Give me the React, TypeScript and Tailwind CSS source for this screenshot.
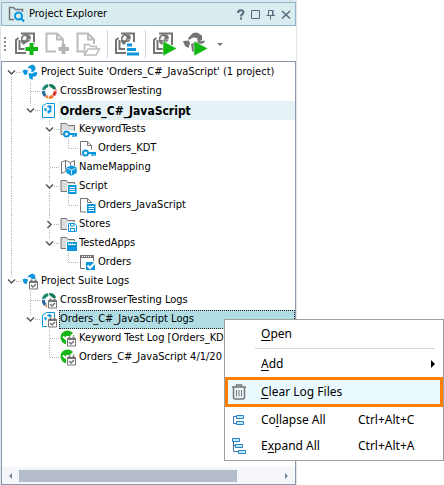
import React from 'react';
import clsx from 'clsx';

type Cell = 'blank' | 'line' | 'tee' | 'elbow' | 'root' | 'open' | 'openLast' | 'closed';

interface TreeRow {
  label: string;
  cells: Cell[];
  icon: React.ReactNode;
  state?: 'active' | 'selected';
}

const BLUE = '#0a96dc';
const GRAY = '#757575';

/* ---------- icon parts ---------- */

const Logo = ({ color = BLUE }: { color?: string }) => (
  <g fill={color}>
    <path d="M6.500 5.500 L8 3 L11.500 1.500 L14 3 L14.500 6.500 L12 9 L10 8.500 L10.500 6 L8.500 5 Z" />
    <path d="M1.500 7.500 L4 6.500 L7 7.500 L6.500 9.500 L5.500 12 L3 11.500 Z" />
    <path d="M7.500 10 L11 10.500 L14 9 L16.500 9.500 L15.500 12.500 L13 14 L12 13 L11.500 17 L8.500 15.500 Z" />
  </g>
);

const Ring = () => (
  <g fill="none" strokeWidth="3">
    <path d="M3.500 8 A6 6 0 0 1 8 3.500" stroke="#1d8a70" />
    <path d="M8.500 3.500 A6 6 0 0 1 14.800 7" stroke="#147b50" />
    <path d="M15 7.500 A6 6 0 0 1 13.500 13.500" stroke="#d3352c" />
    <path d="M13 14 A6 6 0 0 1 6 14.200" stroke="#f07a2a" />
    <path d="M5.500 13.800 A6 6 0 0 1 3.500 8" stroke="#2c6a9c" />
    <path d="M8 1 L9.500 5 M17 9 L13 8.500 M1 9 L5 8 M8 17 L9 13" stroke="#fff" strokeWidth="1" />
  </g>
);

const ProjectBox = () => (
  <g>
    <path d="M2.500 5 V16.500 H14.500 V2.500 H6.500 Z" fill="#fff" stroke={BLUE} />
    <path d="M6.500 5.500 L9.500 4 L11.500 5 V7.500 L9.500 9 L9 6.500 Z M4 7.500 L6.500 7 V10 L5 10.500 Z M7.500 9.500 L12 8.500 L11 11 L9.500 11.500 V13 L7.500 12 Z" fill={BLUE} />
  </g>
);

const Folder = () => <path d="M2 14.500 V3.500 H7.500 L9 5.500 H15.500 V14.500 Z" fill="#dcdcdc" stroke={GRAY} />;

const Page = () => <path d="M2.500 16 V2.500 H9.500 L13.500 6.500 V16 Z M9.500 2.500 V6.500 H13.500" fill="#fff" stroke={GRAY} />;

const Key = () => (
  <g>
    <path d="M4 10 H9 L18.500 11 V17 H4 Z" fill="#fff" />
    <circle cx="7.500" cy="14" r="2.500" fill="none" stroke={BLUE} strokeWidth="2" />
    <path d="M10 14 H18 M14.500 14 V17 M17 14 V16.500" stroke={BLUE} strokeWidth="2" />
  </g>
);

const ScriptBadge = () => (
  <g>
    <path d="M8 7 H18 V18 H8 Z" fill="#fff" />
    <path d="M9 8 H17.500 V17 H9 Z" fill={BLUE} />
    <path d="M10.500 10.500 H16 M10.500 12.500 H16 M10.500 14.500 H16" stroke="#fff" />
  </g>
);

const LogBadge = () => (
  <g>
    <path d="M7 7 H18 V18 H7 Z" fill="#fff" />
    <path d="M8.500 9.500 H16.500 V17 H8.500 Z" fill="#fff" stroke={GRAY} />
    <path d="M8.500 10 H16.500 M10.500 7.500 V10 M14.500 7.500 V10" stroke={GRAY} strokeWidth="2" />
    <path d="M10 13 L12 15 L15 12" fill="none" stroke={GRAY} strokeWidth="1.500" />
  </g>
);

const Passed = () => (
  <g>
    <circle cx="8.500" cy="8.500" r="7" fill="#17b617" />
    <path d="M4 7.500 L8 11 L15 4.500" fill="none" stroke="#fff" strokeWidth="2" />
  </g>
);

const Icon = ({ children }: { children: React.ReactNode }) => (
  <svg className="h-[19px] w-[19px] shrink-0" viewBox="0 0 19 19" aria-hidden="true">
    {children}
  </svg>
);

/* ---------- tree ---------- */

const rows: TreeRow[] = [
  { label: "Project Suite 'Orders_C#_JavaScript' (1 project)", cells: ['root'], icon: <Logo /> },
  { label: 'CrossBrowserTesting', cells: ['line', 'tee'], icon: <Ring /> },
  { label: 'Orders_C#_JavaScript', cells: ['line', 'openLast'], icon: <ProjectBox />, state: 'active' },
  { label: 'KeywordTests', cells: ['line', 'blank', 'open'], icon: <><Folder /><Key /></> },
  { label: 'Orders_KDT', cells: ['line', 'blank', 'line', 'elbow'], icon: <><Page /><Key /></> },
  {
    label: 'NameMapping',
    cells: ['line', 'blank', 'tee'],
    icon: (
      <>
        <path d="M2.500 4 L6.500 2.500 L11.500 4.500 L15.500 2.500 V14 L11.500 15.500 L6.500 13.500 L2.500 15.500 Z M6.500 2.500 V13.500 M11.500 4.500 V9" fill="#fff" stroke={GRAY} />
        <path d="M7 9.500 L12.500 7 L18 9.500 V15 L12.500 18 L7 15 Z" fill={BLUE} stroke="#fff" strokeWidth="0.500" />
        <path d="M8.500 10.500 L12.500 12 L16.500 10.500 M12.500 12 V16.500" fill="none" stroke="#fff" strokeWidth="0.800" />
      </>
    ),
  },
  { label: 'Script', cells: ['line', 'blank', 'open'], icon: <><Folder /><ScriptBadge /></> },
  { label: 'Orders_JavaScript', cells: ['line', 'blank', 'line', 'elbow'], icon: <><Page /><ScriptBadge /></> },
  {
    label: 'Stores',
    cells: ['line', 'blank', 'closed'],
    icon: (
      <>
        <Folder />
        <path d="M8 7 H18 V18 H8 Z" fill="#fff" />
        <path d="M9.500 8.500 H15.500 L17.500 10.500 V16.500 H9.500 Z" fill="#fff" stroke={BLUE} />
        <path d="M11.500 8.500 V11 H15 V8.500 M11.500 16.500 V13.500 H15.500 V16.500" fill="none" stroke={BLUE} />
      </>
    ),
  },
  {
    label: 'TestedApps',
    cells: ['line', 'blank', 'openLast'],
    icon: (
      <>
        <Folder />
        <path d="M7 7 H18 V18 H7 Z" fill="#fff" />
        <path d="M8 8 H18 V17 H8 Z" fill={BLUE} />
        <path d="M9 10.500 H17" stroke="#fff" />
        <path d="M9 9.200 H14" stroke="#fff" strokeWidth="0.700" strokeDasharray="1 1" />
      </>
    ),
  },
  {
    label: 'Orders',
    cells: ['line', 'blank', 'blank', 'elbow'],
    icon: (
      <>
        <path d="M2.500 3 H15.500 V15.500 H2.500 Z" fill="#fff" stroke={GRAY} />
        <path d="M2 3.500 H16" stroke={GRAY} strokeWidth="3" />
        <path d="M4 3.500 H13" stroke="#fff" strokeDasharray="1 1" />
        <path d="M7 8 H18 V18 H7 Z" fill="#fff" />
        <path d="M8 9 H17 V17 H8 Z" fill={BLUE} />
        <path d="M9.500 12.500 L12 15 L17.500 9" fill="none" stroke="#fff" strokeWidth="2" />
      </>
    ),
  },
  { label: 'Project Suite Logs', cells: ['openLast'], icon: <><Logo /><LogBadge /></> },
  { label: 'CrossBrowserTesting Logs', cells: ['blank', 'tee'], icon: <><Ring /><LogBadge /></> },
  { label: 'Orders_C#_JavaScript Logs', cells: ['blank', 'openLast'], icon: <><ProjectBox /><LogBadge /></>, state: 'selected' },
  { label: 'Keyword Test Log [Orders_KD', cells: ['blank', 'blank', 'tee'], icon: <><Passed /><LogBadge /></> },
  { label: 'Orders_C#_JavaScript 4/1/20', cells: ['blank', 'blank', 'elbow'], icon: <><Passed /><LogBadge /></> },
];

const GUIDES: Record<Cell, string> = {
  blank: '',
  line: 'M9.500 0 V19',
  tee: 'M9.500 0 V19 M10 9.500 H19',
  elbow: 'M9.500 0 V9.500 H19',
  root: 'M9.500 14 V19 M14 9.500 H19',
  open: 'M9.500 0 V5 M9.500 14 V19 M14 9.500 H19',
  openLast: 'M9.500 0 V5 M14 9.500 H19',
  closed: 'M9.500 0 V4 M9.500 15 V19 M14 9.500 H19',
};

const GuideCell = ({ cell }: { cell: Cell }) => {
  const guide = (
    <svg className="h-[19px] w-[19px] shrink-0" viewBox="0 0 19 19" aria-hidden="true">
      <path d={GUIDES[cell]} fill="none" stroke="#b4b4b4" strokeDasharray="1 1" />
      {(cell === 'root' || cell === 'open' || cell === 'openLast') && (
        <path d="M6 7.500 L9.500 11 L13 7.500" fill="none" stroke="#555" strokeWidth="1.500" />
      )}
      {cell === 'closed' && <path d="M7.500 6 L11 9.500 L7.500 13" fill="none" stroke="#555" strokeWidth="1.500" />}
    </svg>
  );
  if (cell === 'blank' || cell === 'line' || cell === 'tee' || cell === 'elbow') return guide;
  return (
    <button type="button" aria-label={cell === 'closed' ? 'Expand' : 'Collapse'} className="shrink-0">
      {guide}
    </button>
  );
};

const Tree = () => (
  <ul role="tree" aria-label="Project Explorer" className="overflow-hidden pt-px">
    {rows.map((row) => (
      <li key={row.label} role="treeitem" aria-selected={row.state === 'selected'} className="flex h-[19px]">
        {row.cells.map((cell, i) => (
          <GuideCell key={i} cell={cell} />
        ))}
        <Icon>{row.icon}</Icon>
        <span
          className={clsx(
            'flex flex-1 items-center overflow-hidden border whitespace-nowrap',
            row.state === 'selected' ? 'border-dotted border-[#222] bg-[#b0dce4]' : 'border-transparent',
            row.state === 'active' && 'bg-[#e4f2f6] text-[12px] font-bold'
          )}
        >
          {row.label}
        </span>
      </li>
    ))}
  </ul>
);

/* ---------- toolbar ---------- */

const ToolProject = () => (
  <>
    <path d="M12 22 H2 V9 L4.500 7 M7 2.500 H20 V14 M5.500 9 V18 H11" fill="none" stroke={GRAY} strokeWidth="2" />
    <path d="M7 6 L10 3 L15 3.500 L17 6 L16 10 L12 12 L9.500 14 L7 11 Z" fill={GRAY} />
    <path d="M10 5 L12.500 6 L11.500 9 L8.500 8.500 Z M13 9 L17 8.500" fill="#fff" stroke="#fff" strokeWidth="0.500" />
  </>
);

const ToolPage = () => (
  <path d="M11 20.500 H1.500 V2.500 H12 L18 8.500 V13 M12 2.500 V8.500 H18" fill="none" stroke="#bcbcbc" strokeWidth="2" />
);

const Play = () => <path d="M11 10 L25 17.500 L11 25 Z" fill="#12b812" stroke="#fff" strokeWidth="0.500" />;

const ToolButton = ({ label, children }: { label: string; children: React.ReactNode }) => (
  <button type="button" aria-label={label} className="h-[26px] w-[25px] shrink-0">
    <svg className="h-[26px] w-[25px]" viewBox="0 0 25 26">
      {children}
    </svg>
  </button>
);

const Toolbar = () => (
  <div className="flex h-[35px] items-center gap-1.5 bg-white pl-0.5">
    <svg className="h-4 w-[5px]" viewBox="0 0 5 16" aria-hidden="true">
      <path d="M2 1 V16" stroke="#8a8a8a" strokeWidth="2" strokeDasharray="2 2" />
    </svg>
    <ToolButton label="Add New Project">
      <ToolProject />
      <path d="M17.500 11 V25 M10.500 18 H24.500" stroke="#fff" strokeWidth="6" />
      <path d="M17.500 12 V24 M11.500 18 H24" stroke="#12b812" strokeWidth="4" />
    </ToolButton>
    <ToolButton label="Add New Item">
      <ToolPage />
      <path d="M18.500 13 V23 M13.500 18 H24" stroke="#b4b4b4" strokeWidth="4" />
    </ToolButton>
    <ToolButton label="Add Existing Item">
      <ToolPage />
      <path d="M8.500 23 V13.500 H13 L15 15.500 H20.500 V18 H12 L8.500 24 H20 L23.500 18 H20" fill="#fff" stroke="#bcbcbc" strokeWidth="1.500" />
    </ToolButton>
    <span className="h-7 w-px bg-[#d4d4d4]" />
    <ToolButton label="Project Tests">
      <ToolProject />
      <path d="M12 11 H25 V25 H12 Z" fill="#fff" />
      <path d="M13 14 H18 M13 18.500 H22 M13 23 H25" stroke={BLUE} strokeWidth="3" />
    </ToolButton>
    <span className="h-7 w-px bg-[#d4d4d4]" />
    <ToolButton label="Run Project">
      <ToolProject />
      <Play />
    </ToolButton>
    <ToolButton label="Run Project Suite">
      <path d="M5 7 L10 2 L14 1.500 L19 4.500 V9 L15 11 L14 7 L10 6.500 L6 9 Z M0 10 L6 9.500 L7 12 L5.500 17 L2 15 Z M8 13 L13 11 L22 9.500 L21 12 L13 14 V23 L9 20 Z" fill={GRAY} />
      <Play />
    </ToolButton>
    <button type="button" aria-label="More run options" className="pl-0.5">
      <svg className="h-2 w-2" viewBox="0 0 8 8">
        <path d="M1 3 H7 L4 6 Z" fill={GRAY} />
      </svg>
    </button>
  </div>
);

/* ---------- title bar ---------- */

const titleButtons = [
  { label: 'Help', path: 'M3 5 C3 1.500 9 1.500 8.500 4.500 C8 6.500 6 6 6 8.500 M6 9.500 V11.500', width: 2 },
  { label: 'Maximize', path: 'M1.500 2.500 H9.500 V10.500 H1.500 Z', width: 1 },
  { label: 'Auto Hide', path: 'M3.500 7.500 V2.500 H7.500 V7.500 M8 2 V8 M1.500 7.500 H10 M5.500 8 V11.500', width: 1 },
  { label: 'Close', path: 'M2 3 L10 10.500 M10 3 L2 10.500', width: 1.5 },
];

const TitleBar = () => (
  <header className="flex h-6 items-center border border-[#92b4cb] bg-[#d9edf1] pr-[3px] pl-1.5">
    <svg className="h-[18px] w-[18px]" viewBox="0 0 18 18" aria-hidden="true">
      <path d="M6 14.500 H1.500 V2.500 H5.500 L7.500 4.500 H14.500 V7" fill="none" stroke={GRAY} strokeWidth="1.500" />
      <circle cx="10.500" cy="11" r="3.500" fill="none" stroke={BLUE} strokeWidth="2" />
      <path d="M13 13 L16 16.500" stroke={BLUE} strokeWidth="2" />
    </svg>
    <h1 className="ml-[3px] flex-1 whitespace-nowrap">Project Explorer</h1>
    <div className="flex gap-[3px]">
      {titleButtons.map((b) => (
        <button key={b.label} type="button" aria-label={b.label} className="h-3 w-3">
          <svg className="h-3 w-3" viewBox="0 0 12 12">
            <path d={b.path} fill="none" stroke="#56687a" strokeWidth={b.width} />
          </svg>
        </button>
      ))}
    </div>
  </header>
);

/* ---------- context menu ---------- */

interface MenuItemProps {
  before?: string;
  hot: string;
  after: string;
  icon?: React.ReactNode;
  trailing?: React.ReactNode;
  highlighted?: boolean;
}

const MenuItem = ({ before, hot, after, icon, trailing, highlighted }: MenuItemProps) => (
  <button
    type="button"
    role="menuitem"
    className={clsx(
      'flex w-full items-center text-left whitespace-nowrap',
      highlighted ? 'h-[30px] border-[3px] border-[#ff8000] bg-[#e9f9fe] pl-px' : 'h-[26px] pl-1'
    )}
  >
    <span className="flex w-8 shrink-0 pl-px">{icon}</span>
    <span className="flex-1">
      {before}
      <u className="underline-offset-2">{hot}</u>
      {after}
    </span>
    {trailing}
  </button>
);

const ContextMenu = () => (
  <div role="menu" className="absolute top-[319px] right-0 w-[220px] border border-[#a0a0a0] bg-white py-px font-['Noto_Sans','Open_Sans',sans-serif] text-[12px]">
    <MenuItem hot="O" after="pen" />
    <hr className="mt-px mr-2 mb-0.5 ml-[30px] border-[#d7d7d7]" />
    <MenuItem
      hot="A"
      after="dd"
      trailing={
        <svg className="mr-2 h-2 w-1" viewBox="0 0 4 8" aria-hidden="true">
          <path d="M0 0 L4 4 L0 8 Z" fill="#000" />
        </svg>
      }
    />
    <MenuItem
      hot="C"
      after="lear Log Files"
      highlighted
      icon={
        <svg className="h-[18px] w-[18px]" viewBox="0 0 18 18" aria-hidden="true">
          <path d="M2 4 H16 M6.500 4 V2 H11.500 V4 M3.500 4 V14 Q3.500 16 5.500 16 H12.500 Q14.500 16 14.500 14 V4" fill="none" stroke={GRAY} strokeWidth="1.500" />
          <path d="M6.500 7 V13.500 M9 7 V13.500 M11.500 7 V13.500" stroke={GRAY} />
        </svg>
      }
    />
    <MenuItem
      before="Co"
      hot="l"
      after="lapse All"
      trailing={<span className="w-[85px]">Ctrl+Alt+C</span>}
      icon={
        <svg className="h-4 w-4" viewBox="0 0 16 16" aria-hidden="true">
          <path d="M7 4.500 H3.500 V11.500 H7" fill="none" stroke="#3e6fa6" />
          <path d="M6.500 3.500 H13.500 V6.500 H6.500 Z M6.500 9.500 H13.500 V12.500 H6.500 Z" fill="#b9ecff" stroke="#2e7fc0" />
        </svg>
      }
    />
    <MenuItem
      before="E"
      hot="x"
      after="pand All"
      trailing={<span className="w-[85px]">Ctrl+Alt+A</span>}
      icon={
        <svg className="h-4 w-4" viewBox="0 0 16 16" aria-hidden="true">
          <path d="M3.500 3 V13.500 H8 M3.500 7.500 H6" fill="none" stroke="#3e6fa6" />
          <path d="M2.500 0.500 H9.500 V3.500 H2.500 Z M5.500 6.500 H12.500 V9.500 H5.500 Z M8.500 12.500 H15.500 V15.500 H8.500 Z" fill="#b9ecff" stroke="#2e7fc0" />
        </svg>
      }
    />
  </div>
);

export default function App() {
  return (
    <main className="relative flex min-h-screen bg-white font-['DejaVu_Sans_Condensed','DejaVu_Sans',sans-serif] text-[11px] text-black">
      <section className="flex w-[67%] flex-col border-t-2 border-r border-l border-[#dbe6ef] bg-white">
        <TitleBar />
        <Toolbar />
        <div className="flex flex-1 flex-col justify-between border border-[#8b97ab]">
          <Tree />
          <div className="flex h-[17px] items-center justify-between bg-[#f4f6f9] px-[7px]">
            <svg className="h-[6px] w-[3px]" viewBox="0 0 3 6" aria-hidden="true">
              <path d="M3 0 V6 L0 3 Z" fill="#76869e" />
            </svg>
            <div className="mx-[7px] flex-1">
              <div className="h-3 w-[84%] bg-[#b4bccb]" />
            </div>
            <svg className="h-[6px] w-[3px]" viewBox="0 0 3 6" aria-hidden="true">
              <path d="M0 0 V6 L3 3 Z" fill="#76869e" />
            </svg>
          </div>
        </div>
      </section>
      <ContextMenu />
    </main>
  );
}
